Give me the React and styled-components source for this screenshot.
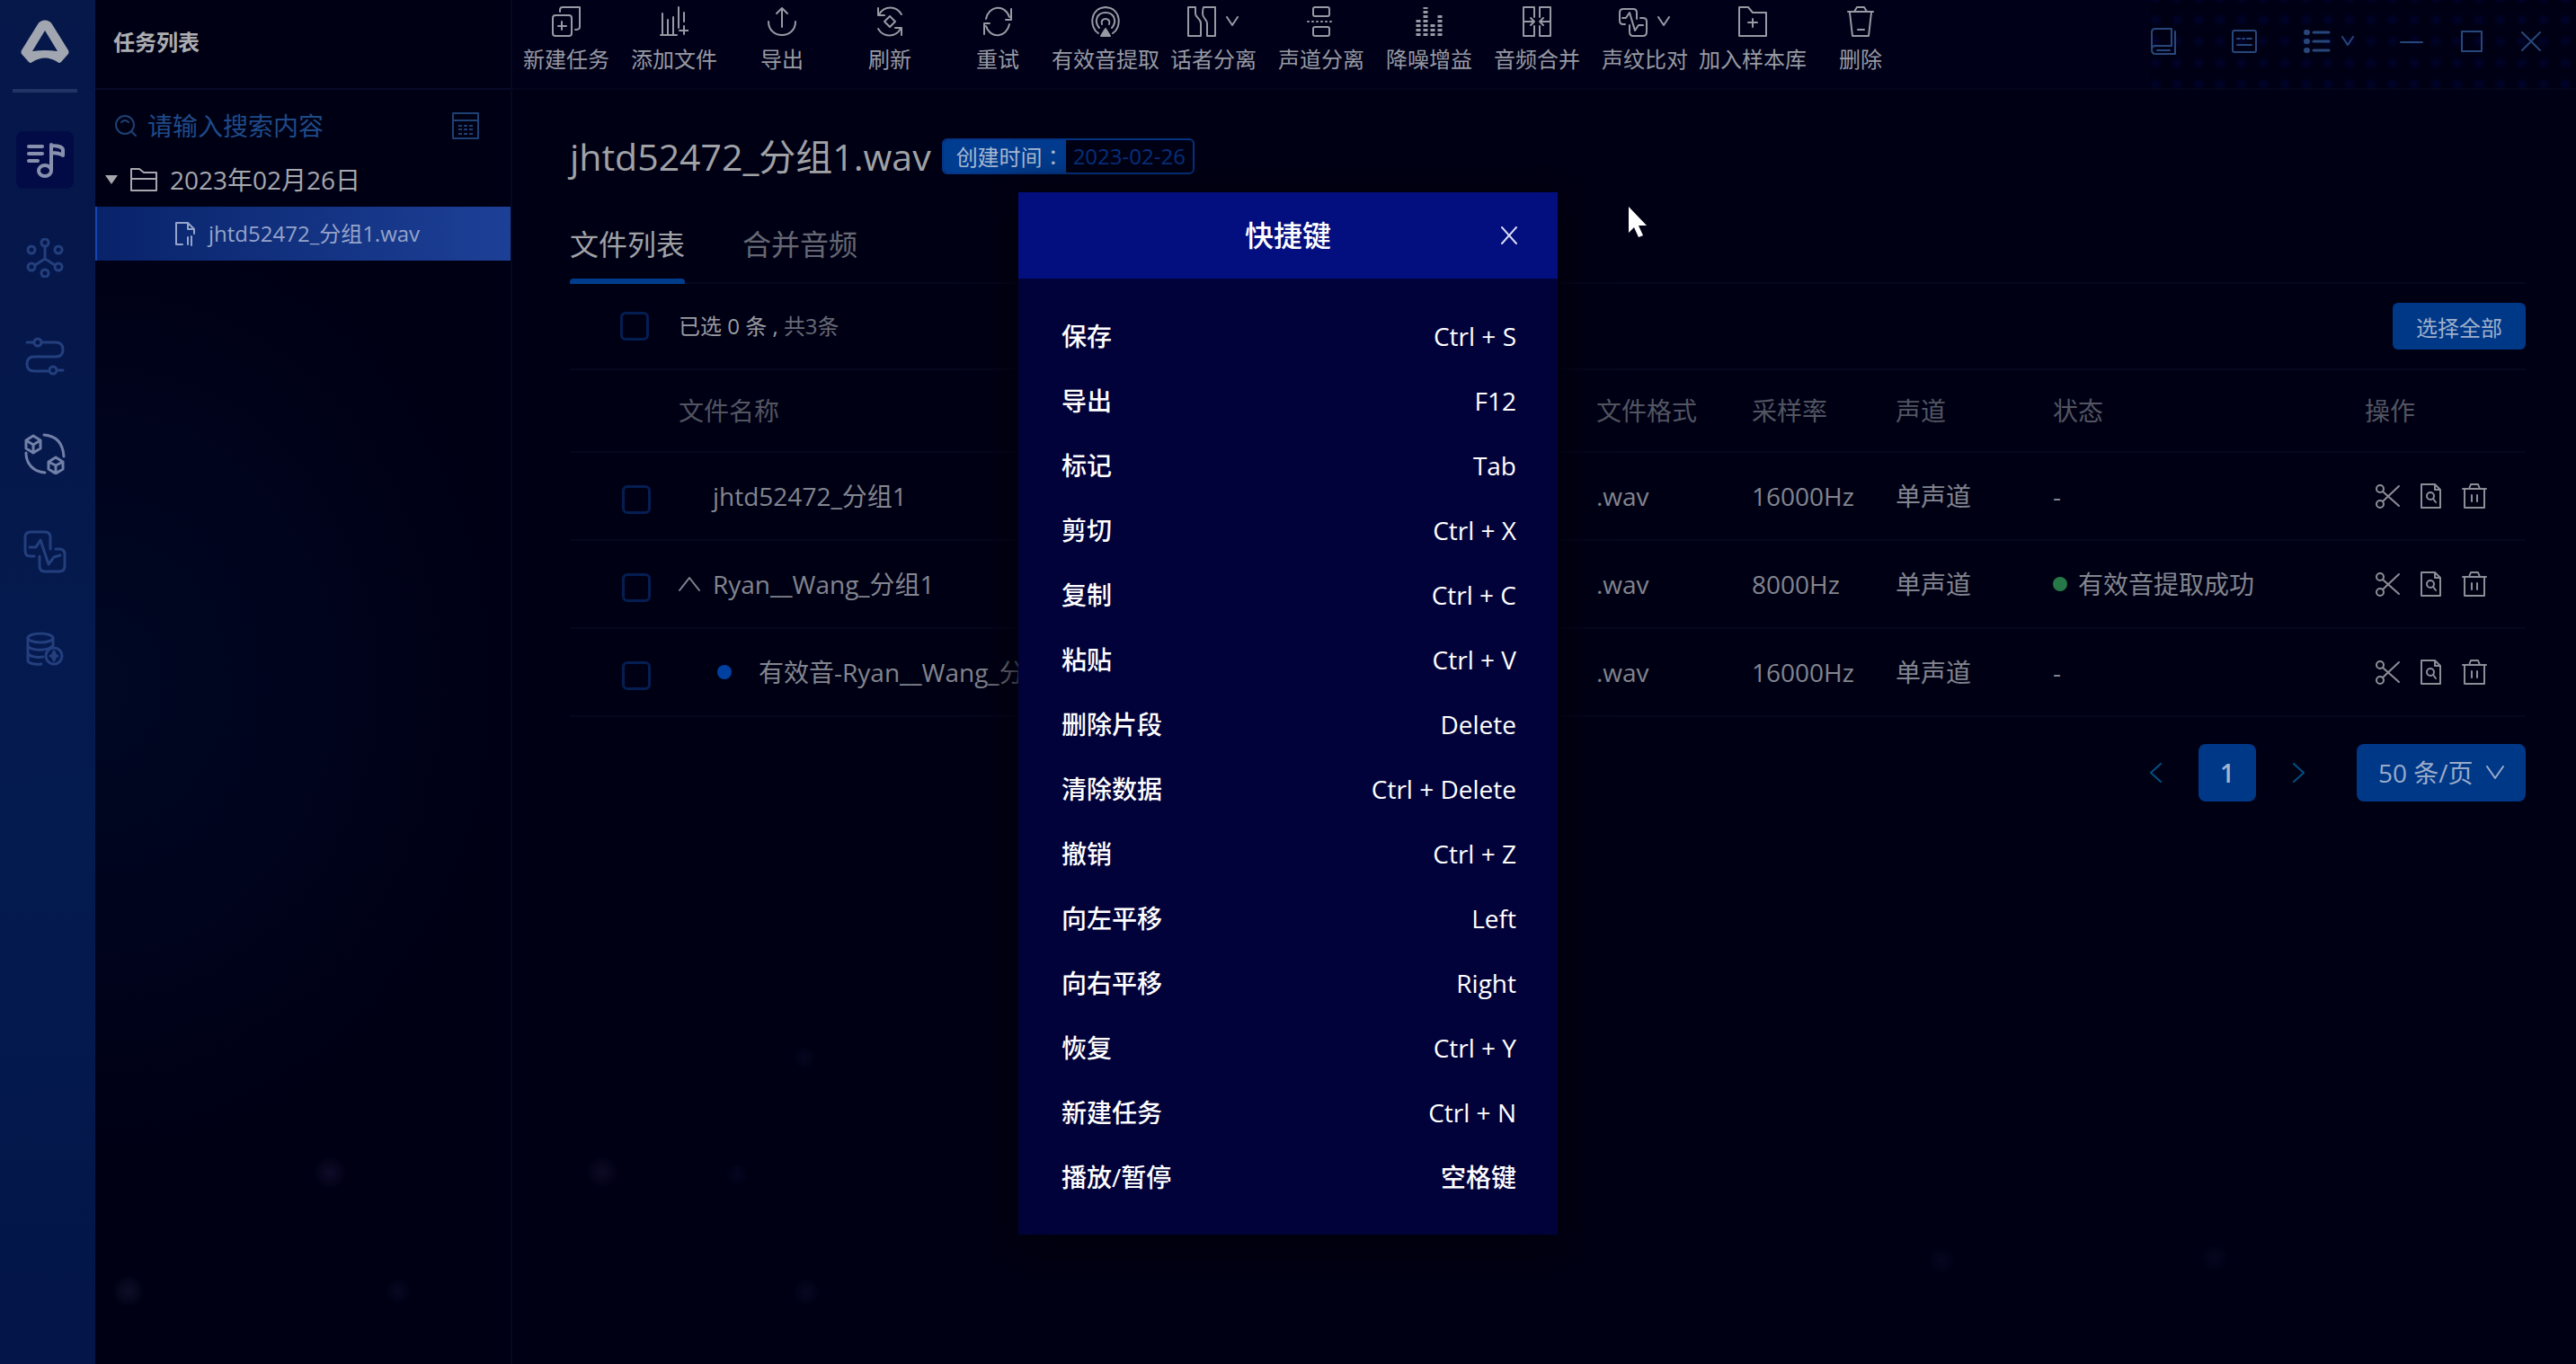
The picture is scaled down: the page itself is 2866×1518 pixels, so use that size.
import React from "react";
import styled, { createGlobalStyle } from "styled-components";

const Global = createGlobalStyle`
  *, *::before, *::after { box-sizing: border-box; }
  html, body { margin: 0; background: #000015; }
  body, button, input, select {
    font-family: "Open Sans", "Noto Sans CJK SC", sans-serif;
  }
  button, input, select { margin: 0; padding: 0; border: 0; background: none; color: inherit; }
  button { display: flex; align-items: center; justify-content: center; cursor: pointer; }
  svg { display: block; flex: none; }
`;

const Shell = styled.div`
  min-height: 100vh;
  display: grid;
  grid-template-columns: 106px 464px minmax(0, 1fr);
  background:
    radial-gradient(circle 18px at 367px 1305px, #0e0c28, transparent),
    radial-gradient(circle 18px at 143px 1437px, #0f0f28, transparent),
    radial-gradient(circle 14px at 443px 1437px, #080823, transparent),
    radial-gradient(circle 18px at 670px 1304px, #0c0b24, transparent),
    radial-gradient(circle 12px at 820px 1307px, #060522, transparent),
    radial-gradient(circle 12px at 895px 1177px, #060620, transparent),
    radial-gradient(circle 15px at 897px 1438px, #080822, transparent),
    radial-gradient(circle 15px at 2160px 1403px, #060620, transparent),
    radial-gradient(circle 15px at 2464px 1400px, #060620, transparent),
    radial-gradient(ellipse 460px 520px at 106px 760px, #000824, transparent),
    #000015;
  color: #96989f;
`;

/* ---------- left rail ---------- */
const Rail = styled.nav`
  display: flex;
  flex-direction: column;
  align-items: center;
  padding: 22px 6px 0 0;
  background: linear-gradient(180deg, #06174a 0%, #05184b 30%, #041b50 62%, #031549 100%);
`;
const RailRule = styled.div`
  width: 72px;
  height: 4px;
  margin: 28px 0 43px;
  background: #1f3463;
`;
const RailList = styled.div`
  display: flex;
  flex-direction: column;
  gap: 45px;
`;
const RailButton = styled.button`
  width: 64px;
  height: 64px;
  border-radius: 8px;
  color: ${(p) => p.$tone || "#233f7d"};
  background: ${(p) => (p.$active ? "#020b45" : "transparent")};
`;

/* ---------- task panel ---------- */
const Panel = styled.aside`
  border-right: 2px solid #060820;
`;
const PanelHead = styled.header`
  height: 100px;
  padding: 0 20px 4px;
  display: flex;
  align-items: center;
  border-bottom: 2px solid #070a2a;
`;
const PanelTitle = styled.h2`
  margin: 0;
  font-size: 24px;
  line-height: 32px;
  font-weight: 700;
  color: #acadb1;
`;
const Search = styled.label`
  display: flex;
  align-items: center;
  gap: 12px;
  height: 80px;
  padding: 0 34px 0 22px;
  color: #1e4072;
`;
const SearchInput = styled.input`
  flex: 1;
  min-width: 0;
  height: 40px;
  font-size: 28px;
  outline: 0;
  &::placeholder { color: #1f4a88; opacity: 1; }
`;
const Folder = styled.button`
  width: 100%;
  height: 40px;
  padding-left: 11px;
  justify-content: flex-start;
  gap: 14px;
  font-size: 28px;
  line-height: 40px;
  color: #a6a8ad;
`;
const FileRow = styled.button`
  width: 100%;
  height: 60px;
  margin-top: 10px;
  padding-left: 86px;
  justify-content: flex-start;
  gap: 14px;
  border-left: 2px solid #1745b0;
  background: linear-gradient(90deg, #08236a, #1d4097);
  font-size: 24px;
  line-height: 32px;
  color: #95a4ca;
`;

/* ---------- top bar ---------- */
const Main = styled.main`
  min-width: 0;
`;
const TopBar = styled.header`
  height: 100px;
  display: flex;
  justify-content: space-between;
  border-bottom: 2px solid #04061c;
  background: radial-gradient(circle, #000226 3px, transparent 7px) right 0 top 10px / 24px 24px;
`;
const Tools = styled.div`
  display: flex;
`;
const Tool = styled.button`
  width: 120px;
  height: 92px;
  padding-top: 6px;
  flex-direction: column;
  justify-content: flex-start;
  gap: 4px;
  color: #979aa3;
  font-size: 24px;
  line-height: 40px;
  white-space: nowrap;
`;
const ToolIcons = styled.span`
  display: flex;
  align-items: center;
  gap: 10px;
  height: 36px;
`;
const ToolArea = styled.div`
  background: #000018;
  flex: 1;
`;
const WindowTools = styled.div`
  display: flex;
  align-items: center;
  gap: 42px;
  padding: 0 38px 6px 0;
  color: #27477a;
`;
const WindowButton = styled.button`
  height: 32px;
  min-width: 24px;
  gap: 10px;
  margin-right: ${(p) => p.$after || "0"};
`;

/* ---------- content ---------- */
const Content = styled.section`
  padding: 46px 56px 0 64px;
`;
const TitleRow = styled.div`
  display: flex;
  align-items: center;
  gap: 12px;
  height: 56px;
`;
const Title = styled.h1`
  margin: 0;
  font-size: 41px;
  line-height: 56px;
  font-weight: 400;
  color: #a0a2a6;
`;
const Tag = styled.span`
  display: flex;
  height: 40px;
  border: 2px solid #053484;
  border-radius: 6px;
  overflow: hidden;
  font-size: 24px;
  line-height: 36px;
`;
const TagLabel = styled.span`
  width: 136px;
  padding-left: 14px;
  white-space: nowrap;
  background: #003c90;
  color: #a9b9d2;
`;
const Colon = styled.span`
  font-family: "Noto Sans CJK TC", sans-serif;
`;
const TagValue = styled.span`
  padding: 0 8px;
  color: #05327e;
`;
const Tabs = styled.div`
  display: flex;
  gap: 64px;
  margin-top: 28px;
  border-bottom: 2px solid #05071c;
`;
const Tab = styled.button`
  position: relative;
  height: 84px;
  font-size: 32px;
  line-height: 48px;
  color: ${(p) => (p.$active ? "#a0a2a6" : "#656873")};
  &::after {
    content: "";
    position: absolute;
    left: 0;
    right: 0;
    bottom: -2px;
    height: 6px;
    border-radius: 4px 4px 0 0;
    background: ${(p) => (p.$active ? "#003c8c" : "transparent")};
  }
`;
const Selection = styled.div`
  display: flex;
  align-items: center;
  height: 96px;
  padding-left: 56px;
  border-bottom: 2px solid #05071c;
  font-size: 24px;
  line-height: 32px;
`;
const Check = styled.input`
  appearance: none;
  display: block;
  width: 32px;
  height: 32px;
  border: 3px solid #051e52;
  border-radius: 6px;
`;
const Count = styled.label`
  flex: 1;
  padding-left: 33px;
  color: #9a9ca2;
`;
const Total = styled.span`
  color: #686b75;
`;
const SelectAll = styled.button`
  width: 148px;
  height: 52px;
  border-radius: 6px;
  background: #003888;
  color: #9fb0cb;
  font-size: 24px;
`;
const Table = styled.table`
  width: 100%;
  table-layout: fixed;
  border-collapse: separate;
  border-spacing: 0;
  font-size: 28px;
  line-height: 40px;
  text-align: left;
`;
const Th = styled.th`
  width: ${(p) => p.$w || "auto"};
  height: 92px;
  padding: 0;
  border-bottom: 2px solid #05071c;
  font-weight: 400;
  color: #525561;
`;
const Td = styled.td`
  height: 98px;
  padding: 0;
  border-bottom: 2px solid #05071c;
  color: #82858e;
  white-space: nowrap;
`;
const CheckCell = styled(Td)`
  padding: 8px 0 0 58px;
`;
const Name = styled.div`
  display: flex;
  align-items: center;
`;
const Toggle = styled.span`
  display: flex;
  width: ${(p) => (p.$child ? "89px" : "38px")};
  padding-left: ${(p) => (p.$child ? "43px" : "0")};
`;
const Dot = styled.i`
  width: 16px;
  height: 16px;
  border-radius: 50%;
  background: ${(p) => p.$color};
`;
const Status = styled.span`
  display: flex;
  align-items: center;
  gap: 12px;
`;
const Actions = styled.div`
  display: flex;
  gap: 20px;
  padding-left: 12px;
`;
const Action = styled.button`
  width: 28px;
  height: 32px;
  color: #8c8e96;
`;
const Pager = styled.div`
  display: flex;
  align-items: center;
  justify-content: flex-end;
  padding-top: 30px;
  font-size: 28px;
`;
const Arrow = styled.button`
  width: 96px;
  height: 64px;
  color: #005080;
`;
const Page = styled.button`
  width: 64px;
  height: 64px;
  border-radius: 8px;
  background: #003888;
  color: #a6b5cf;
  font-size: 28px;
  font-weight: 600;
`;
const SizeBox = styled.label`
  display: grid;
  grid-template-columns: 1fr 44px;
  align-items: center;
  width: 188px;
  height: 64px;
  margin-left: 16px;
  border-radius: 8px;
  background: #003888;
  color: #9aabca;
`;
const SizeSelect = styled.select`
  appearance: none;
  grid-area: 1 / 1 / 2 / 3;
  height: 64px;
  padding-left: 24px;
  font-size: 28px;
  outline: 0;
`;
const SizeChevron = styled.span`
  grid-area: 1 / 2;
  pointer-events: none;
`;

/* ---------- shortcut dialog ---------- */
const Overlay = styled.div`
  position: absolute;
  inset: 0;
  display: flex;
  justify-content: center;
  align-items: flex-start;
  padding-top: 214px;
`;
const Dialog = styled.section`
  width: 600px;
  background: #02023a;
  box-shadow: 0 8px 40px 8px #00000c;
  color: #fff;
`;
const DialogHead = styled.header`
  display: grid;
  grid-template-columns: 64px 1fr 64px;
  align-items: center;
  height: 96px;
  padding-right: 22px;
  padding-left: 22px;
  background: #030e7f;
`;
const DialogTitle = styled.h2`
  grid-column: 2;
  margin: 0;
  text-align: center;
  font-size: 32px;
  line-height: 48px;
  font-weight: 500;
`;
const Close = styled.button`
  height: 64px;
  color: #d8dcf5;
`;
const Shortcuts = styled.dl`
  margin: 0;
  padding: 28px 46px 28px 48px;
  font-size: 28px;
  line-height: 72px;
`;
const Shortcut = styled.div`
  display: flex;
  justify-content: space-between;
`;
const Label = styled.dt`
  font-weight: 500;
`;
const Keys = styled.dd`
  margin: 0;
  font-weight: 500;
`;
const Pointer = styled.svg`
  position: absolute;
  left: 1811px;
  top: 229px;
`;

/* ---------- icons ---------- */
const Svg = ({ w = 32, h = w, vw = w, vh = h, sw = 2, children }) => (
  <svg width={w} height={h} viewBox={`0 0 ${vw} ${vh}`} fill="none" stroke="currentColor"
    strokeWidth={sw} strokeLinecap="round" strokeLinejoin="round" aria-hidden="true">
    {children}
  </svg>
);
const Chevron = () => (
  <Svg w={16} h={12}><path d="M2 1l6 9 6-9" /></Svg>
);

const Logo = () => (
  <svg width="54" height="49" viewBox="0 0 54 49" aria-label="logo">
    <path fillRule="evenodd" fill="#a1a6b0"
      d="M19 5C22-1 32-1 35 5L53 34Q54 36 53 38L45 47Q43 49 41 47Q27 38 13 47Q11 49 9 47L1 38Q0 36 1 34ZM27 12L13 35Q27 33 41 35Z" />
  </svg>
);

const railItems = [
  { name: "任务", active: true, tone: "#8791ad", icon: (
    <Svg w={44} sw={4}><path d="M4 7h15M4 15h15M4 23h10M29 5v28M29 6c5 0 13 1 13 5v6c-4-3-9-3-13-3" /><ellipse cx="22" cy="34" rx="7" ry="6" /></Svg>) },
  { name: "网络", icon: (
    <Svg w={44} sw={3}><path d="M22 9v14M22 23l-11 7M22 23l11 7" /><circle cx="22" cy="5" r="4" /><circle cx="7" cy="13" r="4" /><circle cx="37" cy="13" r="4" /><circle cx="7" cy="32" r="4" /><circle cx="37" cy="32" r="4" /><circle cx="22" cy="39" r="4" /></Svg>) },
  { name: "流程", icon: (
    <Svg w={44} sw={3}><path d="M2 7h7M18 7h16q8 0 8 8t-8 8H10q-8 0-8 8t8 8h16M35 38h7" /><circle cx="14" cy="7" r="4" /><circle cx="31" cy="38" r="4" /></Svg>) },
  { name: "模型", tone: "#7280a8", icon: (
    <Svg w={46} sw={3}><path d="M22 2c14 1 21 10 22 24M2 22c0 12 8 21 21 22" /><path d="M10 3l8 5v9l-8 5-8-5V8zM2 8l8 5 8-5M10 13v9M35 27l8 5v8l-8 5-8-5v-8zM27 32l8 4 8-4M35 36v9" /></Svg>) },
  { name: "比对", icon: (
    <Svg w={48} sw={3}><path d="M12 29H8q-6 0-6-6V8q0-6 6-6h16q6 0 6 6v13M36 21h4q6 0 6 6v13q0 6-6 6H24q-6 0-6-6V29" /><path d="M7 19h7l5-8 9 27 6-8 7-2" /></Svg>) },
  { name: "数据", icon: (
    <Svg w={44} sw={3}><ellipse cx="17" cy="9" rx="14" ry="5" /><path d="M3 9v25c0 3 7 5 15 4M31 9v8M3 17c0 7 26 7 28 0M3 26c2 4 10 5 17 4" /><circle cx="32" cy="29" r="9" /><path d="M32 24l2 5-2 5-2-5zM28 29h8" /></Svg>) },
];

const tools = [
  { label: "新建任务", icon: <><rect x="1" y="10" width="21" height="23" rx="3" /><path d="M9 6V4q0-3 3-3h19v22q0 3-5 3M11 17v9M7 22h9" /></> },
  { label: "添加文件", icon: <path d="M1 32h18M3 8v24M9 15v17M15 12v20M21 1v23M27 7v10M27 22v9M22 27h10" /> },
  { label: "导出", icon: <path d="M16 23V2M10 8l6-6 6 6M1 17c0 20 30 20 30 0" /> },
  { label: "刷新", icon: <><path d="M3 2v8h7M4 9C10-1 23-1 29 9M29 32v-8h-7M28 25C22 35 9 35 3 25" /><path d="M16 11l6 6-6 6-6-6z" /></> },
  { label: "重试", icon: <path d="M3 14C6-1 24-3 29 12M31 3v12h-6M29 20C26 35 8 37 3 22M1 31V19h6" /> },
  { label: "有效音提取", icon: <><path d="M8 30C-2 24-2 2 16 1 34 2 34 24 24 30" /><path d="M9 24C3 17 6 7 16 7s13 10 7 17" /><path d="M12 20c-3-8 11-8 8 0" /><path d="M16 25l-5 8h10z" fill="currentColor" /></> },
  { label: "话者分离", more: true, icon: <path d="M1 1h8v7c0 5 6 5 6 11v14H1zM18 1h13v32h-9V19c0-5-5-5-5-11 0-3 0-5 1-7z" /> },
  { label: "声道分离", icon: <><rect x="7" y="1" width="18" height="10" rx="2" /><rect x="7" y="23" width="18" height="10" rx="2" /><path d="M1 17h30" strokeDasharray="1 4" /></> },
  { label: "降噪增益", icon: <path strokeLinecap="butt" strokeWidth="5" strokeDasharray="3 2" d="M4 33V15M12 33V1M20 33V20M28 33V10" /> },
  { label: "音频合并", icon: <path d="M13 12V1H1v32h12V22M19 12V1h12v32H19V22M2 17h11M9 13l4 4-4 4M30 17H19M23 13l-4 4 4 4" /> },
  { label: "声纹比对", more: true, icon: <><path d="M7 20H5q-4 0-4-4V7q0-4 4-4h11q4 0 4 4v7M24 13h3q4 0 4 4v11q0 5-4 5H16q-4 0-4-5v-7" /><path d="M4 13h4l4-6 6 20 4-6h5" /></> },
  { label: "加入样本库", icon: <path d="M1 33V1h10l5 6h15v26zM16 14v9M11 18h10" /> },
  { label: "删除", icon: <path d="M2 6h28M9 6l3-5h8l3 5M4 7l3 26h18l3-26M13 26h7" /> },
];

const Scissors = () => (
  <Svg w={28}><circle cx="5" cy="6" r="4" /><circle cx="5" cy="23" r="4" /><path d="M8 9l18 16M8 20L26 3" /></Svg>
);
const DocSearch = () => (
  <Svg w={28}><path d="M3 1h15l6 6v20H3zM18 1v6h6" /><circle cx="13" cy="14" r="4" /><path d="M16 17l3 4" /></Svg>
);
const Trash = () => (
  <Svg w={28}><path d="M1 6h26M8 6l2-5h8l2 5M3 6v21h22V6M11 13v7M17 13v7" /></Svg>
);

/* ---------- data ---------- */
const rows = [
  { id: "r1", name: "jhtd52472_分组1", rate: "16000Hz", status: "-" },
  { id: "r2", name: "Ryan__Wang_分组1", rate: "8000Hz", status: "有效音提取成功", open: true, ok: true },
  { id: "r3", name: "有效音-Ryan__Wang_分组1", rate: "16000Hz", status: "-", child: true },
];
const shortcuts = [
  ["保存", "Ctrl + S"], ["导出", "F12"], ["标记", "Tab"], ["剪切", "Ctrl + X"],
  ["复制", "Ctrl + C"], ["粘贴", "Ctrl + V"], ["删除片段", "Delete"], ["清除数据", "Ctrl + Delete"],
  ["撤销", "Ctrl + Z"], ["向左平移", "Left"], ["向右平移", "Right"], ["恢复", "Ctrl + Y"],
  ["新建任务", "Ctrl + N"], ["播放/暂停", "空格键"],
];

export default function App() {
  return (
    <>
      <Global />
      <Shell>
        <Rail>
          <Logo />
          <RailRule />
          <RailList>
            {railItems.map((it) => (
              <RailButton key={it.name} aria-label={it.name} $active={it.active} $tone={it.tone}>
                {it.icon}
              </RailButton>
            ))}
          </RailList>
        </Rail>

        <Panel>
          <PanelHead><PanelTitle>任务列表</PanelTitle></PanelHead>
          <Search>
            <Svg w={24}><circle cx="11" cy="11" r="10" /><path d="M18 18l5 5M7 8q4-4 8 0" /></Svg>
            <SearchInput type="text" placeholder="请输入搜索内容" aria-label="搜索" />
            <Svg w={32}><path d="M2 2h28v28H2zM2 10h28" /><path strokeLinecap="butt" strokeDasharray="4 2" d="M8 16h18M8 20h18M8 25h18" /></Svg>
          </Search>
          <Folder>
            <svg width="14" height="10" viewBox="0 0 14 10" aria-hidden="true"><path d="M0 0h14L7 10z" fill="#a5a7ab" /></svg>
            <Svg w={30} h={26}><path d="M1 25V1h9l5 4h14v20zM1 12h28" /></Svg>
            2023年02月26日
          </Folder>
          <FileRow>
            <Svg w={24} h={28}><path d="M9 26H2V2h13l7 7v5M15 2v7h7M15 18v8M19 17v10" /></Svg>
            jhtd52472_分组1.wav
          </FileRow>
        </Panel>

        <Main>
          <TopBar>
            <ToolArea>
              <Tools>
                {tools.map((t) => (
                  <Tool key={t.label}>
                    <ToolIcons>
                      <Svg w={32} h={34}>{t.icon}</Svg>
                      {t.more && <Chevron />}
                    </ToolIcons>
                    {t.label}
                  </Tool>
                ))}
              </Tools>
            </ToolArea>
            <WindowTools>
              <WindowButton aria-label="手册" $after="18px">
                <Svg w={30}><path d="M24 20V1H6Q2 1 2 5v19q0 5 4 5h22V4M2 24q0-4 4-4h18M8 25h14" /></Svg>
              </WindowButton>
              <WindowButton aria-label="快捷键" $after="8px">
                <Svg w={30} h={28}><rect x="2" y="2" width="26" height="24" rx="2" /><path d="M7 11h3M13 11h2M18 11h5M7 18h16" /></Svg>
              </WindowButton>
              <WindowButton aria-label="菜单" $after="8px">
                <Svg w={32} h={28} sw={3}><path d="M12 4h17M12 14h17M12 24h17" /><path strokeWidth="6" d="M4 4h1M4 14h1M4 24h1" /></Svg>
                <Chevron />
              </WindowButton>
              <WindowButton aria-label="最小化"><Svg w={26}><path d="M1 14h24" /></Svg></WindowButton>
              <WindowButton aria-label="最大化"><Svg w={24}><path d="M1 1h22v22H1z" /></Svg></WindowButton>
              <WindowButton aria-label="关闭"><Svg w={22}><path d="M1 1l20 20M21 1L1 21" /></Svg></WindowButton>
            </WindowTools>
          </TopBar>

          <Content>
            <TitleRow>
              <Title>jhtd52472_分组1.wav</Title>
              <Tag><TagLabel>创建时间<Colon>：</Colon></TagLabel><TagValue>2023-02-26</TagValue></Tag>
            </TitleRow>
            <Tabs role="tablist">
              <Tab role="tab" aria-selected="true" $active>文件列表</Tab>
              <Tab role="tab" aria-selected="false">合并音频</Tab>
            </Tabs>
            <Selection>
              <Check type="checkbox" id="check-all" />
              <Count htmlFor="check-all">已选 0 条 , <Total>共3条</Total></Count>
              <SelectAll>选择全部</SelectAll>
            </Selection>
            <Table>
              <thead>
                <tr>
                  <Th $w="121px" aria-label="选择" />
                  <Th>文件名称</Th>
                  <Th $w="173px">文件格式</Th>
                  <Th $w="160px">采样率</Th>
                  <Th $w="175px">声道</Th>
                  <Th $w="347px">状态</Th>
                  <Th $w="179px">操作</Th>
                </tr>
              </thead>
              <tbody>
                {rows.map((r) => (
                  <tr key={r.id}>
                    <CheckCell><Check type="checkbox" aria-label={r.name} /></CheckCell>
                    <Td>
                      <Name>
                        <Toggle $child={r.child}>
                          {r.open && <Svg w={24} h={18}><path d="M1 16L12 2l11 14" /></Svg>}
                          {r.child && <Dot $color="#0040a0" />}
                        </Toggle>
                        {r.name}
                      </Name>
                    </Td>
                    <Td>.wav</Td>
                    <Td>{r.rate}</Td>
                    <Td>单声道</Td>
                    <Td><Status>{r.ok && <Dot $color="#267848" />}{r.status}</Status></Td>
                    <Td>
                      <Actions>
                        <Action aria-label="剪切"><Scissors /></Action>
                        <Action aria-label="查看"><DocSearch /></Action>
                        <Action aria-label="删除"><Trash /></Action>
                      </Actions>
                    </Td>
                  </tr>
                ))}
              </tbody>
            </Table>
            <Pager>
              <Arrow aria-label="上一页"><Svg w={14} h={22}><path d="M13 1L2 11l11 10" /></Svg></Arrow>
              <Page aria-current="page">1</Page>
              <Arrow aria-label="下一页"><Svg w={14} h={22}><path d="M1 1l11 10L1 21" /></Svg></Arrow>
              <SizeBox>
                <SizeSelect aria-label="每页条数"><option>50 条/页</option></SizeSelect>
                <SizeChevron><Svg w={20} h={16}><path d="M1 1l9 13 9-13" /></Svg></SizeChevron>
              </SizeBox>
            </Pager>
          </Content>
        </Main>
      </Shell>

      <Overlay>
        <Dialog role="dialog" aria-labelledby="shortcut-title">
          <DialogHead>
            <DialogTitle id="shortcut-title">快捷键</DialogTitle>
            <Close aria-label="关闭"><Svg w={18} h={20}><path d="M1 1l16 18M17 1L1 19" /></Svg></Close>
          </DialogHead>
          <Shortcuts>
            {shortcuts.map(([label, keys]) => (
              <Shortcut key={label}><Label>{label}</Label><Keys>{keys}</Keys></Shortcut>
            ))}
          </Shortcuts>
        </Dialog>
      </Overlay>
      <Pointer width="24" height="36" viewBox="0 0 24 36" aria-hidden="true">
        <path d="M1 1v29l6-6 5 11 5-2-5-11h9z" fill="#fff" />
      </Pointer>
    </>
  );
}
